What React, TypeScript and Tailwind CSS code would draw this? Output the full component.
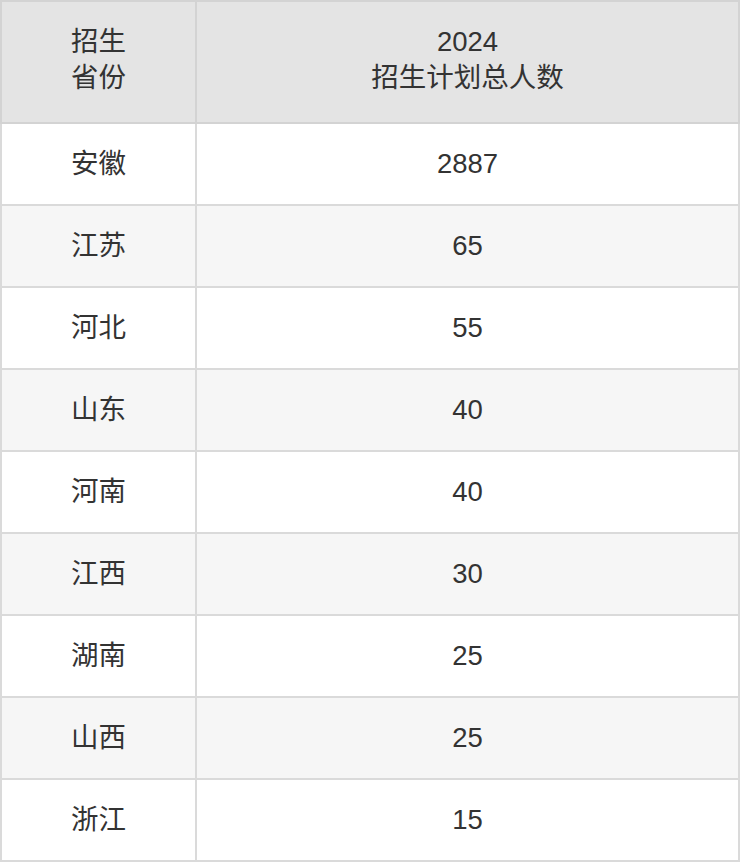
import React from 'react';

const rows: [string, string][] = [
  ['安徽', '2887'],
  ['江苏', '65'],
  ['河北', '55'],
  ['山东', '40'],
  ['河南', '40'],
  ['江西', '30'],
  ['湖南', '25'],
  ['山西', '25'],
  ['浙江', '15'],
];

export default function App() {
  return (
    <div
      className="w-[740px] bg-white text-[#333333] text-[27.5px] leading-[36px]"
      style={{ fontFamily: '"Liberation Sans", "Noto Sans CJK SC", sans-serif' }}
    >
      <table className="w-[740px] border-collapse table-fixed">
        <colgroup>
          <col className="w-[195px]" />
          <col />
        </colgroup>
        <thead>
          <tr className="h-[122px] bg-[#e4e4e4]">
            <th className="border-2 border-[#d3d3d3] pb-[4px] font-normal text-center align-middle">
              招生
              <br />
              省份
            </th>
            <th className="border-2 border-[#d3d3d3] pb-[4px] font-normal text-center align-middle">
              2024
              <br />
              招生计划总人数
            </th>
          </tr>
        </thead>
        <tbody>
          {rows.map(([name, count], i) => (
            <tr key={name + i} className={`h-[82px] ${i % 2 === 1 ? 'bg-[#f6f6f6]' : 'bg-white'}`}>
              <td className="border-2 border-[#dadada] text-center align-middle">{name}</td>
              <td className="border-2 border-[#dadada] text-center align-middle">{count}</td>
            </tr>
          ))}
        </tbody>
      </table>
    </div>
  );
}
